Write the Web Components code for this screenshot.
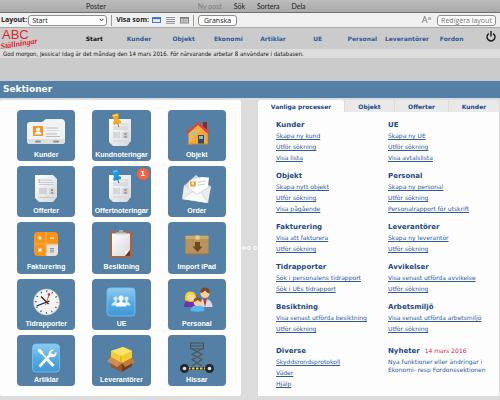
<!DOCTYPE html>
<html lang="sv">
<head>
<meta charset="utf-8">
<title>ABC Ställningar – Sektioner</title>
<style>
  html, body { height: 100%; }
  body { margin: 0; background: #dcdcdc; font-family: "DejaVu Sans", Verdana, sans-serif; color: #1a1a1a; }
</style>
</head>
<body>
<abc-app></abc-app>

<template id="t-app">
  <style>
    :host { display: flex; flex-direction: column; min-height: 100vh; }
  </style>
  <menu-strip></menu-strip>
  <layout-toolbar></layout-toolbar>
  <main-nav></main-nav>
  <section-title>Sektioner</section-title>
  <split-view>
    <tile-board slot="left"></tile-board>
    <process-panel slot="right"></process-panel>
  </split-view>
</template>

<template id="t-menu">
  <style>
    :host { display: flex; align-items: center; padding: 0 0 1px 86px; gap: 12px; overflow: hidden;
      box-sizing: border-box; height: 13px; background: linear-gradient(#bdbdbd, #a9a9a9); border-bottom: 1px solid #6f6f6f; }
    button { all: unset; font: 7px/10px Lato, sans-serif; color: #222; white-space: nowrap; }
    button:first-of-type { margin-right: 80px; }
    button:disabled { color: #808080; }
  </style>
  <button>Poster</button><button disabled>Ny post</button><button>Sök</button><button>Sortera</button><button>Dela</button>
</template>

<template id="t-toolbar">
  <style>
    :host { display: flex; align-items: center; height: 14px; padding: 0 4px 0 1px; background: #f0f0f0;
      border-bottom: 1px solid #a8a8a8; font: bold 7px/10px "Open Sans", sans-serif; color: #222; white-space: nowrap; }
    select, .btn { appearance: none; box-sizing: border-box; height: 11px; margin: 0; border: 1px solid #8d8d8d; border-radius: 3px;
      background: #fdfdfd; font: 7px/9px "Open Sans", sans-serif; color: #222; padding: 0 3px; }
    .pick { display: grid; align-items: center; margin-left: 1px; width: 79px; }
    .pick > * { grid-area: 1 / 1; }
    .pick select { width: 100%; }
    .pick svg { justify-self: end; margin-right: 3px; pointer-events: none; }
    .sep { width: 1px; height: 11px; background: #999; margin: 0 4px; }
    .views { display: flex; gap: 5px; margin-left: 3px; }
    .views button { all: unset; display: flex; }
    .preview { width: 39px; }
    .aa { margin-left: auto; margin-right: 6px; font: 9px/10px "Noto Sans", sans-serif; color: #777; }
    .aa sup { font-size: 6px; line-height: 1px; vertical-align: 3px; }
    .edit { color: #777; width: 59px; padding: 0; }
  </style>
  <label for="layout">Layout:</label>
  <span class="pick"><select id="layout"><option>Start</option></select>
    <svg width="5" height="4" viewBox="0 0 5 4"><path d="M.5 .8 2.5 2.8 4.5 .8" fill="none" stroke="#333"/></svg></span>
  <span class="sep"></span>
  <span>Visa som:</span>
  <span class="views">
    <button aria-label="Formulär"><svg width="9" height="8" viewBox="0 0 9 8"><rect x=".5" y="1.5" width="8" height="5" fill="#e4effb" stroke="#4677bd"/><path d="M0 2.5h9" stroke="#4677bd" stroke-width="1.4"/></svg></button>
    <button aria-label="Lista"><svg width="9" height="8" viewBox="0 0 9 8"><path d="M0 1.5h9M0 3.5h9M0 5.5h9M0 7.3h9" stroke="#888" stroke-width=".9"/></svg></button>
    <button aria-label="Tabell"><svg width="9" height="8" viewBox="0 0 9 8"><rect x=".5" y="1.5" width="8" height="5.5" fill="#ddd" stroke="#888"/><path d="M0 2h9" stroke="#777" stroke-width="1.5"/><path d="M1 4.8h7M3.3 3v4M5.8 3v4" stroke="#999" stroke-width=".8"/></svg></button>
  </span>
  <span class="sep"></span>
  <button class="btn preview">Granska</button>
  <span class="aa">A<sup>a</sup></span>
  <button class="btn edit">Redigera layout</button>
</template>

<template id="t-nav">
  <style>
    :host { display: block; background: #cbcbcb; padding-bottom: 23px; }
    nav { display: grid; grid-template-columns: 72px repeat(9, 1fr) 26px; align-items: center; height: 21px; }
    a { color: #2d5d9c; font: bold 6px/10px "DejaVu Sans", Verdana, sans-serif; text-align: center; text-decoration: none; white-space: nowrap; }
    a[aria-current] { color: #111; }
    .logo { align-self: start; height: 21px; }
    .logo svg { display: block; overflow: visible; }
    .off { all: unset; display: flex; justify-content: center; align-self: start; margin-top: 3px; padding-left: 8px; }
    p { margin: 0; padding-left: 3px; background: #dcdcdc; font: 6px/9px "DejaVu Sans Condensed", Verdana, sans-serif; color: #111; white-space: nowrap; }
  </style>
  <nav>
    <span class="logo"><svg width="40" height="22" viewBox="0 0 40 22" fill="#e0252c">
      <text x="2" y="11" font-family="Liberation Sans, sans-serif" font-size="13">ABC</text>
      <text x="1" y="21" font-family="Liberation Serif, serif" font-style="italic" font-weight="bold" font-size="8" transform="rotate(-9 1 21)">Ställningar</text>
    </svg></span>
    <a href="#start" aria-current="page">Start</a><a href="#kunder">Kunder</a><a href="#objekt">Objekt</a><a href="#ekonomi">Ekonomi</a><a href="#artiklar">Artiklar</a><a href="#ue">UE</a><a href="#personal">Personal</a><a href="#leverantorer">Leverantörer</a><a href="#fordon">Fordon</a>
    <button class="off" aria-label="Avsluta"><svg width="10" height="11" viewBox="0 0 10 11"><path d="M2.8 2.6A4 4 0 1 0 7.2 2.6M5 0v5.6" fill="none" stroke="#151515" stroke-width="1.4"/></svg></button>
  </nav>
  <p>God morgon, Jessica! Idag är det måndag den 14 mars 2016. För närvarande arbetar 8 användare i databasen.</p>
</template>

<template id="t-title">
  <style>
    :host { display: block; background: #5580a5; padding: 0 3px; }
    h1 { margin: 0; font: bold 9px/17px "DejaVu Sans", Verdana, sans-serif; color: #fff; }
  </style>
  <h1><slot></slot></h1>
</template>

<template id="t-split">
  <style>
    :host { flex: 1; display: grid; grid-template-columns: 1fr 17px 1fr; padding: 2px 1px 4px 0; background: #dcdcdc; }
    .grip { display: flex; align-items: center; justify-content: space-around; }
    .grip i { width: 2px; height: 2px; border: 1px solid #fff; border-radius: 50%; }
  </style>
  <slot name="left"></slot>
  <span class="grip"><i></i><i></i><i></i></span>
  <slot name="right"></slot>
</template>

<template id="t-tile">
  <style>
    :host { display: grid; position: relative; }
    button { all: unset; display: flex; flex-direction: column; align-items: center; background: #5580a5; border-radius: 4px; cursor: pointer; }
    .pic { width: 42px; height: 36px; margin-top: 2px; }
    .txt { font: bold 7px/10px "Liberation Sans", Arial, sans-serif; color: #fff; white-space: nowrap; margin-top: 2px; }
    .badge { position: absolute; top: 2px; right: 2px; width: 12px; height: 12px; border-radius: 50%; background: #f9623b;
      color: #fff; font: bold 7px/12px "DejaVu Sans", sans-serif; text-align: center; }
    .badge[hidden] { display: none; }
  </style>
  <button><span class="pic"><slot></slot></span><span class="txt"></span><span class="badge" hidden></span></button>
</template>

<template id="t-board">
  <style>
    :host { display: grid; grid-template-columns: repeat(3, 1fr); grid-auto-rows: 1fr; gap: 5px 17px; padding: 10px 15px 10px 17px; background: #fdfdfd; border-radius: 2px; }
    svg { display: block; width: 42px; height: 36px; }
  </style>
  <svg width="0" height="0" style="position:absolute;width:0;height:0" aria-hidden="true"><defs>
    <linearGradient id="paper" x2="1" y2="1"><stop stop-color="#fff"/><stop offset="1" stop-color="#d4d7da"/></linearGradient>
    <linearGradient id="sky" x2="0" y2="1"><stop stop-color="#8ccdf2"/><stop offset=".5" stop-color="#58abe2"/><stop offset="1" stop-color="#3f97d6"/></linearGradient>
  </defs></svg>

  <app-tile label="Kunder"><svg viewBox="0 0 42 36">
    <path d="M2 13q0-3 3-3h12l4-3h15q4 0 4 4v18q0 3-3 3H5q-3 0-3-3z" fill="#f1f2f3"/>
    <path d="M2 27h38v2q0 3-3 3H5q-3 0-3-3z" fill="#dcdee0"/>
    <rect x="8" y="14" width="10" height="10" fill="#f59324"/><circle cx="13" cy="17.6" r="2" fill="#fff"/><path d="M9.800 22.500v-1.500l2-1.500h2.400l2 1.500v1.500z" fill="#fff"/>
    <path d="M21 16h12M21 22h11M21 24.500h14" stroke="#bbb"/><path d="M21 18.500h13" stroke="#dedede"/>
    <rect x="10" y="28.500" width="6" height="2" rx="1" fill="#8b8f93"/><rect x="28" y="28.500" width="6" height="2" rx="1" fill="#8b8f93"/>
  </svg></app-tile>

  <app-tile label="Kundnoteringar"><svg viewBox="0 0 42 36">
    <path d="M9 7h22v22l-4 5H13l-4-4z" fill="url(#paper)"/>
    <path d="M20 12h8M13 15h15M13 17h15" stroke="#c9cbcd"/><rect x="13" y="20" width="7" height="6" fill="#d5d7d9"/><rect x="22.500" y="20" width="6" height="6" fill="#cdd0d2"/><circle cx="25.500" cy="22" r="1.100" fill="#888"/><path d="M23.500 25.500q2-3 4 0z" fill="#888"/><path d="M13 29h14" stroke="#cfcfcf"/>
    <path d="m12 3 6-2 1 3-1 1 1 3 2 1v2l-7 2-1-2 1-2-1-4-1-1z" fill="#f9a81c"/><path d="m13 3 4-1 .5 1.500-4 1z" fill="#ffd45c"/><path d="m17.500 11 1.500 4" stroke="#a87a33"/>
  </svg></app-tile>

  <app-tile label="Objekt"><svg viewBox="0 0 42 36">
    <path d="M27 10h4v9h-4z" fill="#8c2b2e"/>
    <path d="M12.500 20 22 11.500 31.500 20v12h-19z" fill="#f8b544"/><path d="m12.500 32 14-16.500 5 4.500v12z" fill="#f0a233" opacity=".6"/>
    <path d="m11 21 11-9.500L33 21" fill="none" stroke="#d9453f" stroke-width="2.400"/>
    <rect x="22" y="23" width="6" height="9" fill="#34495e"/><rect x="23" y="24" width="4" height="3" fill="#8db8cf"/><circle cx="17.500" cy="21.500" r="2" fill="#8ecad0"/><path d="M11.500 32h21" stroke="#d98e2a"/>
  </svg></app-tile>

  <app-tile label="Offerter"><svg viewBox="0 0 42 36">
    <path d="M10 7h18l4 4v18l-4 5H14l-4-4z" fill="url(#paper)"/>
    <path d="M14 12h13M14 14.500h15M14 16.500h15" stroke="#c9cbcd"/><path d="M14 11v4" stroke="#999" stroke-width=".7"/><rect x="14" y="20" width="8" height="6" fill="#d0d2d4"/><rect x="24" y="20" width="6" height="6" fill="#d5d7d9"/><circle cx="27" cy="22" r="1.100" fill="#888"/><path d="M25 25.500q2-3 4 0z" fill="#888"/><path d="M14 29.500h15" stroke="#c2c4c6"/>
  </svg></app-tile>

  <app-tile label="Offertnoteringar" badge="1"><svg viewBox="0 0 42 36">
    <path d="M9 7h22v22l-4 5H13l-4-4z" fill="url(#paper)"/>
    <path d="M20 12h8M13 15h15M13 17h15" stroke="#c9cbcd"/><rect x="13" y="20" width="7" height="6" fill="#d5d7d9"/><rect x="22.500" y="20" width="6" height="6" fill="#cdd0d2"/><circle cx="25.500" cy="22" r="1.100" fill="#888"/><path d="M23.500 25.500q2-3 4 0z" fill="#888"/><path d="M13 29h14" stroke="#cfcfcf"/>
    <path d="m12 3 6-2 1 3-1 1 1 3 2 1v2l-7 2-1-2 1-2-1-4-1-1z" fill="#189be6"/><path d="m13 3 4-1 .5 1.500-4 1z" fill="#62c7fa"/><path d="m17.500 11 1.500 4" stroke="#2b6e9b"/>
  </svg></app-tile>

  <app-tile label="Order"><svg viewBox="0 0 42 36">
    <path d="m9 17 11-10 15 12-3 9-22-3z" fill="#d6d8da"/>
    <path d="m13 13 12-4 8 .5-1.500 12-10 4-9-5z" fill="#fff"/><path d="M13.500 13.500h6.500l-.5 5h-5z" fill="#f59a23"/><circle cx="16.800" cy="15.500" r="1.200" fill="#fff"/><path d="m22 14 8-1M22 17l7-1" stroke="#ccc"/>
    <path d="m8 17 13 9 14-8-3 17-26-4z" fill="#ececed"/><path d="m6 31 11-8 3.500 2.500L25 24l7 11z" fill="#f9f9f9"/><path d="m8 17 12.500 9.500L35 18M6 31l11-7.500M32 35l-7-11" fill="none" stroke="#c9cbcd" stroke-width=".7"/>
  </svg></app-tile>

  <app-tile label="Fakturering"><svg viewBox="0 0 42 36">
    <rect x="9" y="8" width="24" height="24" rx="4" fill="#f7941e"/><path d="M21.300 20.300H33V28q0 4-4 4h-7.700z" fill="#e4e4e4"/>
    <path d="M21 8v24M9 20h24" stroke="#fbb45e" stroke-width=".8"/>
    <path d="M15 12v4M13 14h4M25 14h4M13.500 24.500l3 3M16.500 24.500l-3 3" stroke="#fff" stroke-width="1.200"/><path d="M25 24.500h4M25 26.200h4M25 27.900h4" stroke="#888" stroke-width=".9"/>
  </svg></app-tile>

  <app-tile label="Besiktning"><svg viewBox="0 0 42 36">
    <rect x="10" y="7.500" width="22" height="26" rx="1" fill="#b2623a"/><path d="M12 9.500h18V26l-5 6H12z" fill="url(#paper)"/><path d="m30 26-5 6v-5z" fill="#f6f6f6"/><path d="m30 26-5 6h5z" fill="#6d3b25"/>
    <path d="M16 8.500h10v2H16z" fill="#c9ccd0"/><path d="M19 6h4v3h-4z" fill="#a9adb2"/>
  </svg></app-tile>

  <app-tile label="Import iPad"><svg viewBox="0 0 42 36">
    <rect x="9.500" y="11.500" width="23" height="19" rx="1" fill="#b8935c"/><path d="M9.500 12h23v3h-23z" fill="#c9a770"/><path d="M19.500 11.500h4v4h-4z" fill="#ead08f"/><path d="M19 18h5v4.500h2.500L21.500 28l-5-5.500H19z" fill="#6d4a22"/><path d="M9.500 30h23" stroke="#8f6d3c"/>
  </svg></app-tile>

  <app-tile label="Tidrapporter"><svg viewBox="0 0 42 36">
    <circle cx="21.500" cy="21" r="13.200" fill="#c9ccce"/><circle cx="21.500" cy="21" r="12.400" fill="#f2f3f3"/>
    <circle cx="21.500" cy="21" r="10.800" fill="none" stroke="#444" stroke-width="1.800" stroke-dasharray="1 4.655" stroke-dashoffset=".5"/>
    <path d="m16 15.500 7.500 7.500M11.500 25l13-5" stroke="#222" stroke-width="1.300"/><path d="m20.500 24 3.500-10" stroke="#e02a2a" stroke-width=".8"/><circle cx="24" cy="13.500" r="1.300" fill="#e02a2a"/>
  </svg></app-tile>

  <app-tile label="UE"><svg viewBox="0 0 42 36">
    <rect x="7" y="7" width="28" height="28" rx="3.500" fill="url(#sky)" stroke="#7cc3ee" stroke-width=".8"/>
    <g fill="#d5edfb"><circle cx="15.500" cy="17.500" r="2.100"/><path d="M11.500 24.500q0-2.500 3-3.500v-2h2v2q2 1 3 3.500z"/><circle cx="26.500" cy="17.500" r="2.100"/><path d="M22.500 24.500q1-2.500 3-3.500v-2h2v2q3 1 3 3.500z"/></g>
    <circle cx="21" cy="17.200" r="2.600" fill="#fff"/><path d="M15.800 25.500q0-3.500 4-4.300v-2.500h2.400v2.500q4 .8 4 4.300z" fill="#fff"/>
  </svg></app-tile>

  <app-tile label="Personal"><svg viewBox="0 0 42 36">
    <path d="M22 26q0-8 7-8 7 0 7.500 8z" fill="#d9dbe6"/><path d="m27 18 2 8 2-8z" fill="#c43a3f"/>
    <circle cx="29" cy="12.500" r="4.600" fill="#f9cf98"/><path d="M24.500 12q-.5-5.500 4.500-5.500 5.500 0 4.800 6-3-.5-4.800-3-1.500 2-4.500 2.500z" fill="#7a4a28"/>
    <path d="M8 26q0-7 6-7 7 0 7 7z" fill="#6a35a6"/><path d="M9 19q-1-8.500 5.500-8.500T20 19q-2 2-5 2t-6-2z" fill="#f3cf25"/><circle cx="15" cy="16.200" r="3.600" fill="#fbd7a8"/><path d="M11 15q1.500-.5 3-2.500 2 2 4.500 2-.5-3-4-3T11 15z" fill="#f5d63a"/>
    <path d="M14.500 30q.5-6 7-6t7 6q-7 1.500-14 0z" fill="#5bb5ee"/><circle cx="21.500" cy="21.300" r="3.800" fill="#f9cf98"/><path d="M17.700 21q-.5-4.500 3.800-4.500t4 4.500q-2.500-.5-3.700-2-1.500 1.700-4.100 2z" fill="#8a5424"/>
  </svg></app-tile>

  <app-tile label="Artiklar"><svg viewBox="0 0 42 36">
    <rect x="7.500" y="7" width="27" height="28" rx="3.500" fill="url(#sky)" stroke="#7cc3ee" stroke-width=".8"/>
    <path d="M14.500 13.500 27.500 28" stroke="#fff" stroke-width="1.600"/><path d="m13 12.500 2-.8 3.200 3.500-2 2-3.400-3.200z" fill="#fff"/><path d="m22.500 22.500 6 6.500" stroke="#fff" stroke-width="3"/>
    <path d="M14.500 29.500 25 18" stroke="#fff" stroke-width="2.600"/><path d="M29.300 12.500l-3 2.800 .4 1.800 1.900.3 2.700-2.700q.8 3.300-1.600 4.900-2.300 1.200-4.500-.2-2.400-2.300-1-4.800 1.800-2.700 5.100-2.100z" fill="#fff"/>
  </svg></app-tile>

  <app-tile label="Leverantörer"><svg viewBox="0 0 42 36">
    <path d="m11 22 11 5v8l-11-5z" fill="#9a552a"/><path d="m22 27 10-6v8l-10 6z" fill="#6f3a1a"/>
    <path d="m11 14 12-4 9 4v7l-10 5-11-5z" fill="#f2cd2f"/><path d="m11 14 12-4 9 4-11 5z" fill="#fae36a"/><path d="M21 19v7" stroke="#cf9f1f" stroke-width=".8"/>
    <path d="m11 20 11 6-5 4-10-6z" fill="#d28b50"/><path d="m22 26 10-5 3 4-10 5z" fill="#c27a40"/>
  </svg></app-tile>

  <app-tile label="Hissar"><svg viewBox="0 0 42 36">
    <path d="M14.500 6h13v6h-13zM14.500 9h13" fill="none" stroke="#4b5157" stroke-width="1.100"/>
    <path d="m16 12 10 5.500-10 5L26 29M26 12l-10 5.500 10 5L16 29" fill="none" stroke="#50565c" stroke-width="1.300"/>
    <path d="M8 31.500h26" stroke="#333" stroke-width="3"/><path d="M12 31.500h18" stroke="#e6d63a" stroke-width="2" stroke-dasharray="2.500 1.500"/>
    <circle cx="8.500" cy="31.500" r="4.500" fill="#26292c"/><circle cx="8.500" cy="31.500" r="1.800" fill="#dfe2e4"/><circle cx="33.500" cy="31.500" r="4.500" fill="#26292c"/><circle cx="33.500" cy="31.500" r="1.800" fill="#dfe2e4"/>
  </svg></app-tile>
</template>

<template id="t-panel">
  <style>
    :host { display: flex; flex-direction: column; min-width: 0; }
    .tabs { display: grid; grid-template-columns: 86px 49px 53px 1fr; gap: 1px; }
    .tabs button { all: unset; text-align: center; background: #e9e9e9; color: #1b4a85; font: bold 6px/12px "DejaVu Sans", Verdana, sans-serif; white-space: nowrap; border-radius: 2px 2px 0 0; padding-top: 1px; height: 11px; }
    .tabs button[aria-selected="true"] { background: #fdfdfd; }
    .body { flex: 1; display: grid; grid-template-columns: 112px 1fr; align-content: start; row-gap: 8px; background: #fdfdfd; padding: 8px 0 4px 18px; }
    .last { margin-top: 4px; }
  </style>
  <div class="tabs" role="tablist">
    <button role="tab" aria-selected="true">Vanliga processer</button><button role="tab">Objekt</button><button role="tab">Offerter</button><button role="tab">Kunder</button>
  </div>
  <div class="body">
    <link-group heading="Kunder" links="Skapa ny kund|Utför sökning|Visa lista"></link-group>
    <link-group heading="UE" links="Skapa ny UE|Utför sökning|Visa avtalslista"></link-group>
    <link-group heading="Objekt" links="Skapa nytt objekt|Utför sökning|Visa pågående"></link-group>
    <link-group heading="Personal" links="Skapa ny personal|Utför sökning|Personalrapport för utskrift"></link-group>
    <link-group heading="Fakturering" links="Visa att fakturera|Utför sökning"></link-group>
    <link-group heading="Leverantörer" links="Skapa ny leverantör|Utför sökning"></link-group>
    <link-group heading="Tidrapporter" links="Sök i personalens tidrapport|Sök i UEs tidrapport"></link-group>
    <link-group heading="Avvikelser" links="Visa senast utförda avvikelse|Utför sökning"></link-group>
    <link-group heading="Besiktning" links="Visa senast utförda besiktning|Utför sökning"></link-group>
    <link-group heading="Arbetsmiljö" links="Visa senast utförda arbetsmiljö|Utför sökning"></link-group>
    <link-group class="last" heading="Diverse" links="Skyddsrondsprotokoll|Väder|Hjälp"></link-group>
    <news-item class="last" heading="Nyheter" date="14 mars 2016">Nya funktioner eller ändringar i<br>Ekonomi- resp Fordonssektionen</news-item>
  </div>
</template>

<template id="t-group">
  <style>
    :host { display: block; }
    h2 { margin: 0; font: bold 7px/10px "DejaVu Sans", Verdana, sans-serif; color: #1b4a85; }
    ul { list-style: none; margin: 0; padding: 0; }
    li { font: 6px/11px "DejaVu Sans", Verdana, sans-serif; white-space: nowrap; }
    a { color: #2b5c97; text-decoration: underline; }
  </style>
  <h2></h2><ul></ul>
</template>

<template id="t-news">
  <style>
    :host { display: block; }
    header { display: flex; gap: 5px; }
    h2 { margin: 0; font: bold 7px/10px "DejaVu Sans", Verdana, sans-serif; color: #1b4a85; }
    time { font: 6px/10px "DejaVu Sans", Verdana, sans-serif; color: #e0203a; }
    p { margin: 2px 0 0; font: 6px/8px "DejaVu Sans", Verdana, sans-serif; color: #2b5c97; white-space: nowrap; }
  </style>
  <header><h2></h2><time></time></header><p><slot></slot></p>
</template>

<script>
  class Base extends HTMLElement {
    constructor() {
      super();
      const t = document.getElementById(this.constructor.template);
      this.attachShadow({ mode: "open" }).append(t.content.cloneNode(true));
    }
    $(s) { return this.shadowRoot.querySelector(s); }
  }
  const simple = (name, template) =>
    customElements.define(name, class extends Base { static template = template; });

  customElements.define("app-tile", class extends Base {
    static template = "t-tile";
    connectedCallback() {
      this.$(".txt").textContent = this.getAttribute("label");
      const badge = this.getAttribute("badge");
      if (badge) { this.$(".badge").textContent = badge; this.$(".badge").hidden = false; }
    }
  });
  customElements.define("link-group", class extends Base {
    static template = "t-group";
    connectedCallback() {
      this.$("h2").textContent = this.getAttribute("heading");
      this.$("ul").replaceChildren(...this.getAttribute("links").split("|").map(text => {
        const li = document.createElement("li"), a = document.createElement("a");
        a.href = "#" + encodeURIComponent(text);
        a.textContent = text;
        li.append(a);
        return li;
      }));
    }
  });
  customElements.define("news-item", class extends Base {
    static template = "t-news";
    connectedCallback() {
      this.$("h2").textContent = this.getAttribute("heading");
      this.$("time").textContent = this.getAttribute("date");
    }
  });
  simple("menu-strip", "t-menu");
  simple("layout-toolbar", "t-toolbar");
  simple("main-nav", "t-nav");
  simple("section-title", "t-title");
  simple("split-view", "t-split");
  simple("tile-board", "t-board");
  simple("process-panel", "t-panel");
  simple("abc-app", "t-app");
</script>
</body>
</html>
